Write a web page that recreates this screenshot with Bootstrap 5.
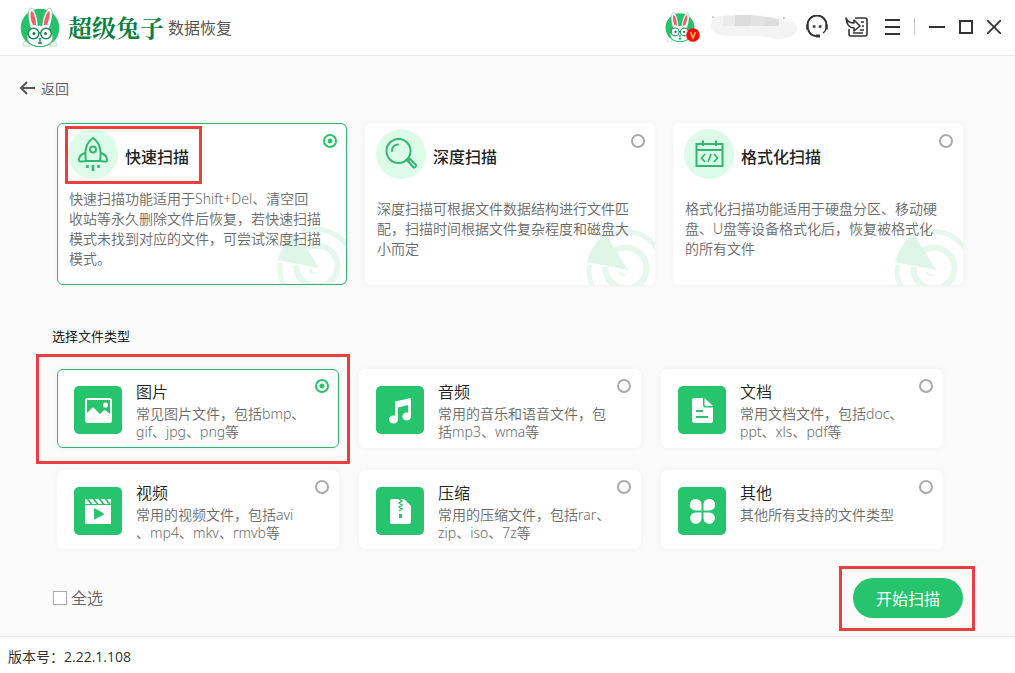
<!DOCTYPE html>
<html lang="zh-CN">
<head>
<meta charset="utf-8">
<meta name="viewport" content="width=device-width, initial-scale=1">
<title>超级兔子数据恢复</title>
<link href="https://cdn.jsdelivr.net/npm/bootstrap@5.3.0/dist/css/bootstrap.min.css" rel="stylesheet">
<style>
  :root { --brand: #26c46c; --line: #2fb56e; --frame: #e93f42; }
  body { font-family: "Open Sans", "Noto Sans CJK SC", sans-serif; font-size: 14px; line-height: 20px; color: #333; background: #fafafa; }
  .topbar { height: 56px; background: #fff; border-bottom: 1px solid #ececec; padding: 0 14px 2px 20px; }
  .brand-name { font-size: 24px; line-height: 32px; font-weight: 700; color: #0c8040; font-family: "Noto Serif CJK SC", "Noto Sans CJK SC", serif; }
  .brand-sub { font-size: 16px; color: #555; padding-top: 2px; }
  .tool-btn { border: 0; background: none; padding: 0; line-height: 0; color: #333; }
  .window-tools { gap: 14px; }
  .avatar-badge { right: -5px; bottom: 0; line-height: 0; }
  .divider { width: 1px; height: 17px; background: #ccc; }
  .back-link { color: #555; font-weight: 350; text-decoration: none; padding: 23px 18px 24px; gap: 6px; }
  .scan-grid, .type-grid { display: grid; grid-template-columns: repeat(3, minmax(0, 1fr)); }
  .scan-grid { gap: 18px; padding: 0 52px 0 57px; }
  .type-grid { gap: 22px 20px; padding: 0 72px 0 57px; }
  .option-card { position: relative; background: #fff; border: 1px solid #fff; border-radius: 6px; box-shadow: 0 0 6px rgba(0,0,0,.04); cursor: pointer; }
  .option-card.chosen { border-color: var(--line); }
  .scan-card { min-height: 162px; padding: 5px 10px; }
  .scan-head { width: fit-content; gap: 7px; }
  .type-card { min-height: 79px; padding: 13px 15px 6px 16px; gap: 14px; }
  .option-title { font-size: 16px; line-height: 18px; color: #222; font-weight: 350; }
  .scan-card .option-title { font-weight: 500; padding-top: 6px; }
  .muted-text { color: #6a6a6a; font-weight: 350; font-family: "Noto Sans", "Noto Sans CJK SC", sans-serif; }
  .scan-desc { position: relative; z-index: 1; padding: 0 12px 0 1px; min-height: 100px; }
  .type-desc { line-height: 18px; margin-top: 4px; white-space: nowrap; }
  .type-icon { margin-top: 3px; }
  .pick { appearance: none; position: absolute; top: 10px; right: 9px; width: 14px; height: 14px; margin: 0; border: 2px solid #aaa; border-radius: 50%; background: #fff; }
  .type-card .pick { top: 9px; }
  .pick:checked { border-color: var(--brand); background: radial-gradient(circle, var(--brand) 2px, #fff 3px); }
  .radar { position: absolute; right: -1px; bottom: -2px; }
  .chosen .radar { right: 0; bottom: 0; }
  .red-frame { position: absolute; border: 3px solid var(--frame); pointer-events: none; z-index: 2; }
  .frame-title { inset: -3px -13px -5px -3px; }
  .frame-card { inset: -16px -12px -17px -22px; }
  .frame-btn { inset: -12px -12px -13px -14px; }
  .section-label { font-size: 13px; line-height: 16px; color: #000; font-weight: 350; margin: 43px 52px 25px; }
  .action-row { padding: 29px 52px 18px 53px; }
  .all-box { appearance: none; width: 14px; height: 14px; margin: 0; border: 1px solid #aaa; background: #fff; }
  .all-box:checked { background: var(--brand); }
  .all-label { font-size: 16px; color: #666; font-weight: 350; }
  .start-btn { width: 110px; height: 40px; border: 0; border-radius: 20px; background: var(--brand); color: #fff; font-size: 16px; padding: 2px 0 0; }
  .start-btn:hover { background: #20b261; color: #fff; }
  .statusbar { background: #fff; border-top: 1px solid #ececec; padding: 10px 8px 6px; font-size: 14px; }
</style>
</head>
<body class="d-flex flex-column min-vh-100">

<svg width="0" height="0" class="position-absolute" aria-hidden="true">
  <symbol id="rabbit" viewBox="0 0 40 40">
    <circle cx="20" cy="21" r="19.300" fill="#27c06b"/>
    <path d="M11 22C8 13 7 2 11 1C15 1 18 12 18 20ZM22 20C22 12 26 1 30 1C34 3 32 14 29 22Z" fill="#fff" stroke="#3aa873" stroke-width=".5"/>
    <path d="M13 18C10 12 10 5 11.500 4C14 5 16 12 16 18ZM24 18C24 12 27 5 29 4C31 6 29 13 27 18Z" fill="#ed6268"/>
    <path d="M8 27C9 16 31 16 32 27C34 32 31 39 20 39C9 39 6 32 8 27Z" fill="#fff"/>
    <path d="M3 39C2 33 8 33 10 39ZM30 39C31 33 38 33 37 39Z" fill="#fff" stroke="#8bc9a9" stroke-width=".6"/>
    <circle cx="13.500" cy="26.500" r="5.300" fill="#fff" stroke="#168a55" stroke-width="1.400"/>
    <circle cx="26" cy="26.500" r="5.300" fill="#fff" stroke="#168a55" stroke-width="1.400"/>
    <path d="M18.500 26h2.500M20 32v4M18 36h4" stroke="#168a55" stroke-width="1.300"/>
    <circle cx="14" cy="26.500" r="1.500" fill="#20764e"/><circle cx="25.500" cy="26.500" r="1.500" fill="#20764e"/>
    <path d="M18.500 31h3L20 32.800Z" fill="#168a55"/>
  </symbol>
  <symbol id="radar-art" viewBox="0 0 70 57">
    <g fill="none" stroke="#e6f7ed">
      <path d="M26 5.500A37 37 0 0 1 72 20M4.500 36A37 37 0 0 0 10 62" stroke-width="5"/>
      <path d="M29 22.500A20.500 20.500 0 1 1 20.500 38" stroke-width="6"/>
      <path d="M34 43Q36 47 41 46" stroke-width="2"/>
    </g>
    <path d="M43 41L2 33C5 21 12 11 21 5.500Z" fill="#dff5e8"/>
  </symbol>
</svg>

<header class="topbar d-flex align-items-center">
  <svg width="40" height="40" aria-hidden="true"><use href="#rabbit"/></svg>
  <span class="brand-name ms-2">超级兔子</span>
  <span class="brand-sub ms-1">数据恢复</span>

  <div class="d-flex align-items-center ms-auto">
    <div class="position-relative me-3">
      <svg class="d-block" width="30" height="30" aria-hidden="true"><use href="#rabbit"/></svg>
      <span class="position-absolute avatar-badge"><svg width="14" height="14" viewBox="0 0 14 14" aria-hidden="true"><circle cx="7" cy="7" r="6.800" fill="#f50c0c"/><path d="M4.500 4L7 10L9.500 4" fill="none" stroke="#ffc45c" stroke-width="1.500"/></svg></span>
    </div>
    <svg width="86" height="26" viewBox="0 0 86 26" aria-hidden="true">
      <path d="M1 4Q12 0 40 1Q66 2 74 7Q88 9 86 15Q86 24 66 25Q50 21 34 22Q2 24 0 14Z" fill="#f3f3f3"/>
      <path d="M24 1H40V12H24Z" fill="#dcdcdc"/><path d="M40 1L54 3V12H40Z" fill="#e2e2e2"/><path d="M54 3L68 5V12H54Z" fill="#dedede"/><path d="M12 2H24V12H12Z" fill="#ebebeb"/>
      <path d="M1 3h2M72 4h2" stroke="#999"/>
    </svg>
    <button type="button" class="tool-btn ms-2" aria-label="客服">
      <svg width="24" height="24" viewBox="0 0 24 24" fill="none" stroke="#333" stroke-width="2"><path d="M2.500 10A9.500 9.500 0 0 1 21.500 10M3 14A9 9 0 0 0 11 21H15"/><path d="M2.500 9.500v5M21.500 9.500v5" stroke-width="2.600"/><path d="M11 21h4" stroke-width="3"/><path d="M21 14q-1 3-3 4" stroke-width="1.300"/><path d="M7.800 11.500h2.600M13.800 11.500h2.600" stroke-width="2.600"/></svg>
    </button>
    <button type="button" class="tool-btn mx-3" aria-label="导入">
      <svg width="24" height="24" viewBox="0 0 24 24" fill="none" stroke="#333" stroke-width="1.600" stroke-linejoin="round"><path d="M10 3H20Q22 3 22 5V19Q22 21 20 21H6Q4 21 4 19V14"/><path d="M1 3Q3 8 9 8V5L15 11L9 16V13Q2 13 1 3Z" fill="#fff"/><path d="M16 7h3M17 11h2M15 15h4M8 18h10"/></svg>
    </button>
    <div class="window-tools d-flex align-items-center">
      <button type="button" class="tool-btn" aria-label="菜单">
        <svg width="15" height="18" viewBox="0 0 15 18" stroke="#333" stroke-width="2"><path d="M0 2h15M0 9h15M0 16h15"/></svg>
      </button>
      <span class="divider"></span>
      <button type="button" class="tool-btn" aria-label="最小化">
        <svg width="16" height="16" viewBox="0 0 16 16" stroke="#333" stroke-width="2"><path d="M0 8h16"/></svg>
      </button>
      <button type="button" class="tool-btn" aria-label="最大化">
        <svg width="14" height="14" viewBox="0 0 14 14" fill="none" stroke="#333" stroke-width="2"><path d="M1 1h12v12H1z"/></svg>
      </button>
      <button type="button" class="tool-btn" aria-label="关闭">
        <svg width="14" height="14" viewBox="0 0 14 14" stroke="#333" stroke-width="1.800"><path d="M0 0L14 14M14 0L0 14"/></svg>
      </button>
    </div>
  </div>
</header>

<main class="flex-grow-1">
  <a href="#" class="back-link d-inline-flex align-items-center">
    <svg width="17" height="16" viewBox="0 0 17 16" fill="none" stroke="#555" stroke-width="2"><path d="M17 7H3M9 1L3 7L9 13"/></svg>
    <span>返回</span>
  </a>

  <section class="scan-grid">
    <label class="option-card scan-card chosen">
      <input class="pick" type="radio" name="scan" checked>
      <span class="scan-head d-flex align-items-center position-relative">
        <svg width="50" height="50" viewBox="0 0 50 50" fill="none" stroke="#2fb86f" stroke-width="2" stroke-linejoin="round" stroke-linecap="round"><circle cx="25" cy="25" r="25" fill="#dcfbe8" stroke="none"/><path d="M18 32C16 20 19 13 25 9C31 13 34 20 32 32ZM17 24Q11 26 11 31Q11 33 14 32.500L18 32M33 24Q39 26 39 31Q39 33 36 32.500L32 32"/><circle cx="25" cy="20.500" r="3"/><path d="M25 36v6M19.500 36v3M30.500 36v3" stroke-width="2.600" stroke-linecap="butt"/></svg>
        <span class="option-title">快速扫描</span>
        <span class="red-frame frame-title"></span>
      </span>
      <span class="scan-desc muted-text d-flex align-items-center"><span>快速扫描功能适用于Shift+Del、清空回<br>收站等永久删除文件后恢复，若快速扫描模式未找到对应的文件，可尝试深度扫描模式。</span></span>
      <svg class="radar" width="70" height="57" aria-hidden="true"><use href="#radar-art"/></svg>
    </label>

    <label class="option-card scan-card">
      <input class="pick" type="radio" name="scan">
      <span class="scan-head d-flex align-items-center">
        <svg width="50" height="50" viewBox="0 0 50 50" fill="none" stroke="#2fb86f" stroke-width="2"><circle cx="25" cy="25" r="25" fill="#dcfbe8" stroke="none"/><circle cx="22.500" cy="22" r="12"/><path d="M16 22Q16 16 22 15.500" stroke-linecap="round"/><path d="M32 32L37.500 38.500Q40 39 40 36L33.500 29.500Z" stroke-linejoin="round"/><path d="M30 30l3 3"/></svg>
        <span class="option-title">深度扫描</span>
      </span>
      <span class="scan-desc muted-text d-flex align-items-center">深度扫描可根据文件数据结构进行文件匹配，扫描时间根据文件复杂程度和磁盘大小而定</span>
      <svg class="radar" width="70" height="57" aria-hidden="true"><use href="#radar-art"/></svg>
    </label>

    <label class="option-card scan-card">
      <input class="pick" type="radio" name="scan">
      <span class="scan-head d-flex align-items-center">
        <svg width="50" height="50" viewBox="0 0 50 50" fill="none" stroke="#2fb86f" stroke-width="2"><circle cx="25" cy="25" r="25" fill="#dcfbe8" stroke="none"/><path d="M12.500 15H38.500V37H12.500ZM12.500 21H38.500M19 11.500V17M32 11.500V17"/><path d="M21 25L17.500 29L21 33M30 25L33.500 29L30 33M27 25L24 33" stroke-width="1.700"/></svg>
        <span class="option-title">格式化扫描</span>
      </span>
      <span class="scan-desc muted-text d-flex align-items-center">格式化扫描功能适用于硬盘分区、移动硬盘、U盘等设备格式化后，恢复被格式化的所有文件</span>
      <svg class="radar" width="70" height="57" aria-hidden="true"><use href="#radar-art"/></svg>
    </label>
  </section>

  <h2 class="section-label">选择文件类型</h2>

  <section class="type-grid">
    <label class="option-card type-card chosen d-flex align-items-start">
      <input class="pick" type="radio" name="kind" checked>
      <svg class="type-icon flex-shrink-0" width="48" height="48" viewBox="0 0 48 48"><rect width="48" height="48" rx="5" fill="#26c46c"/><rect x="11" y="12" width="27" height="25" rx="2.500" fill="#fff"/><path d="M13 27L18 22Q19 21 20 22L26 28L29.500 24.500Q30.500 23.500 31.500 24.500L36 28V14H13Z" fill="#26c46c"/><circle cx="31.500" cy="19" r="2.600" fill="#fff"/></svg>
      <span class="d-block"><span class="option-title d-block">图片</span><span class="type-desc muted-text d-block">常见图片文件，包括bmp、<br>gif、jpg、png等</span></span>
      <span class="red-frame frame-card"></span>
    </label>

    <label class="option-card type-card d-flex align-items-start">
      <input class="pick" type="radio" name="kind">
      <svg class="type-icon flex-shrink-0" width="48" height="48" viewBox="0 0 48 48"><rect width="48" height="48" rx="5" fill="#26c46c"/><g fill="#fff"><path d="M19 15.500L35 12V32H32.200V19L21.800 21.500V34H19Z"/><ellipse cx="17.500" cy="33.500" rx="4.500" ry="4"/><ellipse cx="30.700" cy="30.500" rx="4.300" ry="4"/></g></svg>
      <span class="d-block"><span class="option-title d-block">音频</span><span class="type-desc muted-text d-block">常用的音乐和语音文件，包<br>括mp3、wma等</span></span>
    </label>

    <label class="option-card type-card d-flex align-items-start">
      <input class="pick" type="radio" name="kind">
      <svg class="type-icon flex-shrink-0" width="48" height="48" viewBox="0 0 48 48"><rect width="48" height="48" rx="5" fill="#26c46c"/><path d="M16.500 12H25V19.500Q25 21.500 27 21.500H35V34.500Q35 37 32.500 37H16.500Q14 37 14 34.500V14.500Q14 12 16.500 12Z" fill="#fff"/><path d="M26.500 12L35 20H28Q26.500 20 26.500 18.500Z" fill="#fff"/><path d="M18 25h7M18 31h12" stroke="#26c46c" stroke-width="2"/></svg>
      <span class="d-block"><span class="option-title d-block">文档</span><span class="type-desc muted-text d-block">常用文档文件，包括doc、<br>ppt、xls、pdf等</span></span>
    </label>

    <label class="option-card type-card d-flex align-items-start">
      <input class="pick" type="radio" name="kind">
      <svg class="type-icon flex-shrink-0" width="48" height="48" viewBox="0 0 48 48"><rect width="48" height="48" rx="5" fill="#26c46c"/><path d="M11 12H37V17H11ZM11 18H37V37H11Z" fill="#fff"/><path d="M13 11.500l5 6M19 11.500l5 6M25 11.500l5 6M31 11.500l5 6" stroke="#26c46c" stroke-width="1.800"/><path d="M20 22.500Q20 21 21.500 21.800L29.500 26.300Q30.500 27 29.500 27.700L21.500 32Q20 33 20 31.500Z" fill="#26c46c"/></svg>
      <span class="d-block"><span class="option-title d-block">视频</span><span class="type-desc muted-text d-block">常用的视频文件，包括avi<br>、mp4、mkv、rmvb等</span></span>
    </label>

    <label class="option-card type-card d-flex align-items-start">
      <input class="pick" type="radio" name="kind">
      <svg class="type-icon flex-shrink-0" width="48" height="48" viewBox="0 0 48 48"><rect width="48" height="48" rx="5" fill="#26c46c"/><path d="M16 12H28L35 19V35Q35 37 33 37H16Q14 37 14 35V14Q14 12 16 12Z" fill="#fff"/><path d="M23 12l3 2l-3 2l3 2l-3 2l3 2l-3 2" fill="none" stroke="#26c46c" stroke-width="1.500"/><rect x="23" y="27" width="3" height="4" fill="#26c46c"/></svg>
      <span class="d-block"><span class="option-title d-block">压缩</span><span class="type-desc muted-text d-block">常用的压缩文件，包括rar、<br>zip、iso、7z等</span></span>
    </label>

    <label class="option-card type-card d-flex align-items-start">
      <input class="pick" type="radio" name="kind">
      <svg class="type-icon flex-shrink-0" width="48" height="48" viewBox="0 0 48 48"><rect width="48" height="48" rx="5" fill="#26c46c"/><path d="M17.500 12A5.500 5.500 0 0 1 23.500 18V23.500H17.500A5.700 5.700 0 0 1 17.500 12ZM31.500 12A5.700 5.700 0 0 1 31.500 23.500H25.500V18A5.500 5.500 0 0 1 31.500 12ZM17.500 25.500H23.500V31.500A5.700 5.700 0 1 1 17.500 25.500ZM25.500 25.500H31.500A5.700 5.700 0 1 1 25.500 31.500Z" fill="#fff"/></svg>
      <span class="d-block"><span class="option-title d-block">其他</span><span class="type-desc muted-text d-block">其他所有支持的文件类型</span></span>
    </label>
  </section>

  <div class="action-row d-flex align-items-center justify-content-between">
    <label class="d-flex align-items-center gap-1 all-label"><input class="all-box" type="checkbox"><span>全选</span></label>
    <div class="position-relative">
      <button type="button" class="btn start-btn d-block">开始扫描</button>
      <span class="red-frame frame-btn"></span>
    </div>
  </div>
</main>

<footer class="statusbar">版本号：2.22.1.108</footer>

<script src="https://cdn.jsdelivr.net/npm/bootstrap@5.3.0/dist/js/bootstrap.bundle.min.js"></script>
</body>
</html>
